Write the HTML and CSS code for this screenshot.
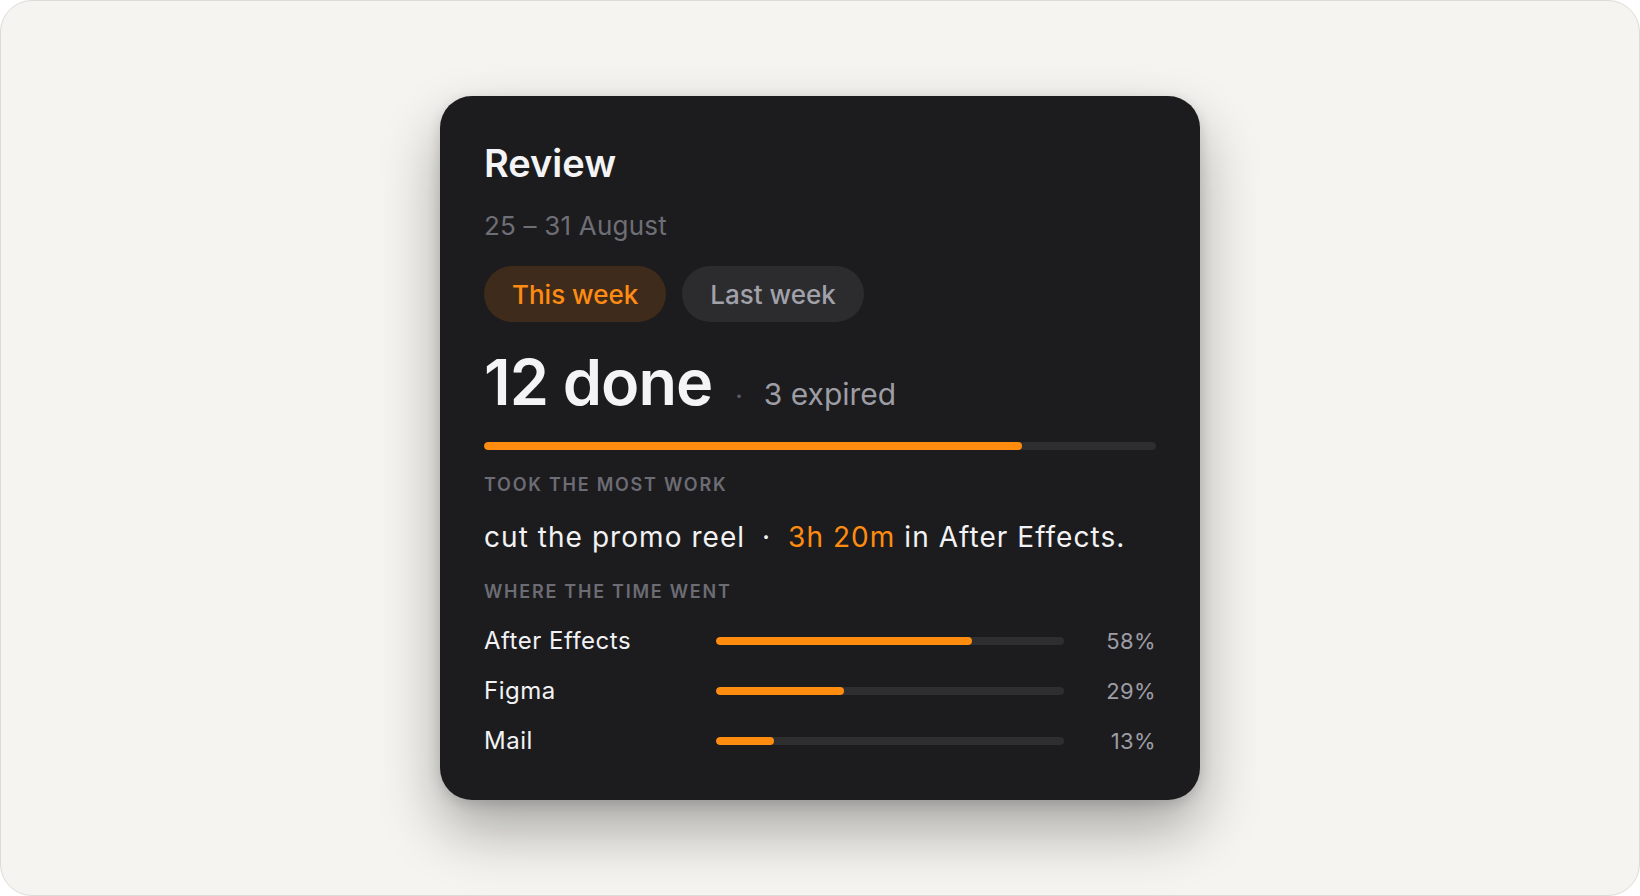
FILE: index.html
```html
<!DOCTYPE html>
<html lang="en">
<head>
    <meta charset="UTF-8">
    <meta name="viewport" content="width=device-width, initial-scale=1.0">
    <title>Review</title>
    <link rel="stylesheet" href="styles.css">
</head>
<body>
<div class="frame">
    <div class="card">
        <h1 class="title">Review</h1>
        <p class="dates">25 – 31 August</p>

        <div class="pills">
            <button class="pill active">This week</button>
            <button class="pill">Last week</button>
        </div>

        <div class="summary">
            <span class="done">12 done</span>
            <span class="sep">·</span>
            <span class="expired">3 expired</span>
        </div>

        <div class="progress">
            <div class="progress-fill" style="width: 80%"></div>
        </div>

        <h2 class="label">Took the most work</h2>
        <p class="top-task">cut the promo reel <span class="sep-small">·</span> <span class="hl">3h 20m</span> in After Effects.</p>

        <h2 class="label label-time">Where the time went</h2>
        <ul class="apps">
            <li class="app">
                <span class="app-name">After Effects</span>
                <div class="bar"><div class="bar-fill" style="width: 73.5%"></div></div>
                <span class="pct">58%</span>
            </li>
            <li class="app">
                <span class="app-name">Figma</span>
                <div class="bar"><div class="bar-fill" style="width: 36.8%"></div></div>
                <span class="pct">29%</span>
            </li>
            <li class="app">
                <span class="app-name">Mail</span>
                <div class="bar"><div class="bar-fill" style="width: 16.8%"></div></div>
                <span class="pct">13%</span>
            </li>
        </ul>
    </div>
</div>
</body>
</html>
```

FILE: styles.css
```css
* {
  box-sizing: border-box;
}

html, body {
  margin: 0;
  padding: 0;
  height: 100%;
}

body {
  font-family: Inter, "Noto Sans", sans-serif;
  background: #ffffff;
}

.frame {
  height: 100vh;
  border: 1px solid #dddbd6;
  border-radius: 32px;
  background: #f5f4f0;
  display: flex;
  align-items: center;
  justify-content: center;
}

.card {
  width: 760px;
  height: 704px;
  padding: 44px;
  background: #1c1c1e;
  border-radius: 32px;
  box-shadow: 0 30px 60px rgba(0, 0, 0, 0.32), 0 4px 14px rgba(0, 0, 0, 0.14);
  color: #f2f2f4;
}

.title {
  margin: 0;
  font-size: 38px;
  line-height: 46px;
  font-weight: 600;
  color: #f4f4f6;
}

.dates {
  margin: 24px 0 0;
  font-size: 26px;
  line-height: 32px;
  letter-spacing: 0.2px;
  color: #6e6e76;
}

.pills {
  display: flex;
  gap: 16px;
  margin-top: 24px;
}

.pill {
  height: 56px;
  padding: 0 28px;
  border: none;
  border-radius: 28px;
  font-family: inherit;
  font-size: 26px;
  font-weight: 500;
  background: #2c2c2f;
  color: #a1a1a9;
  cursor: pointer;
}

.pill.active {
  background: #3f2b1b;
  color: #ff8c12;
}

.summary {
  display: flex;
  align-items: baseline;
  margin-top: 28px;
  height: 64px;
}

.done {
  font-size: 63px;
  line-height: 64px;
  font-weight: 600;
  letter-spacing: -1px;
  color: #f4f4f6;
}

.sep {
  margin: 0 21px 0 23px;
  font-size: 26px;
  color: #5c5c64;
}

.expired {
  font-size: 30px;
  color: #9d9da5;
}

.progress {
  height: 8px;
  margin-top: 28px;
  border-radius: 4px;
  background: #2e2e31;
  overflow: hidden;
}

.progress-fill {
  height: 100%;
  border-radius: 4px;
  background: #ff8c0f;
}

.label {
  margin: 23px 0 0;
  font-size: 18px;
  line-height: 24px;
  font-weight: 600;
  letter-spacing: 1.75px;
  text-transform: uppercase;
  color: #6c6c74;
}

.top-task {
  margin: 22px 0 0;
  font-size: 28px;
  line-height: 36px;
  letter-spacing: 1.05px;
  color: #f2f2f4;
}

.sep-small {
  margin: 0 8px;
}

.hl {
  color: #ff8c0f;
}

.label-time {
  margin-top: 25px;
}

.apps {
  list-style: none;
  margin: 22px 0 0;
  padding: 0;
  display: flex;
  flex-direction: column;
  gap: 20px;
}

.app {
  display: grid;
  grid-template-columns: 208px 1fr 68px;
  column-gap: 24px;
  align-items: center;
  height: 30px;
}

.app-name {
  font-size: 24px;
  line-height: 30px;
  letter-spacing: 0.5px;
  color: #f2f2f4;
}

.bar {
  height: 8px;
  border-radius: 4px;
  background: #2e2e31;
  overflow: hidden;
}

.bar-fill {
  height: 100%;
  border-radius: 4px;
  background: #ff8c0f;
}

.pct {
  text-align: right;
  font-size: 22px;
  line-height: 30px;
  letter-spacing: 0.4px;
  color: #9d9da5;
}
```
